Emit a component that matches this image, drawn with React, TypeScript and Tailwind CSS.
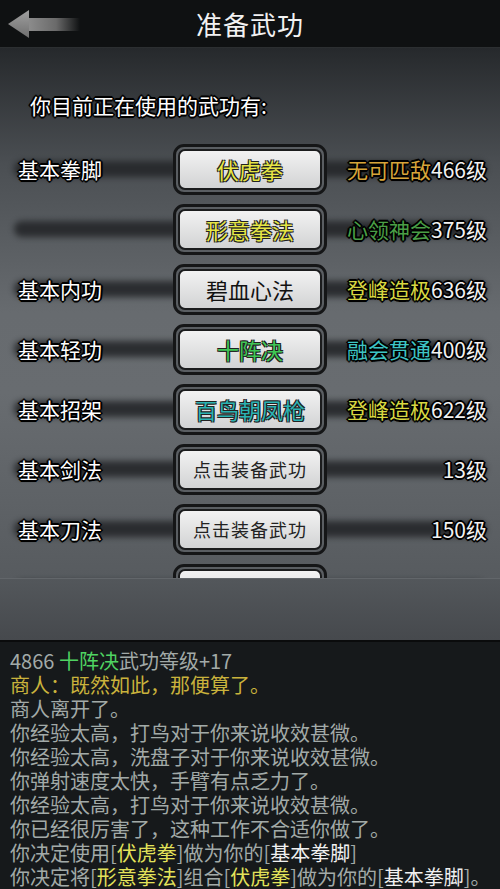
import React from 'react'

const FONT = "font-['Noto_Sans_CJK_SC','Noto_Sans',sans-serif]"
const OUTLINE =
  '[text-shadow:-1px_-1px_0_#000,1px_-1px_0_#000,-1px_1px_0_#000,1px_1px_0_#000,-2px_0_0_#000,2px_0_0_#000,0_-2px_0_#000,0_2px_0_#000,0_0_3px_#000]'
const SOFT = '[text-shadow:-1px_-1px_0_#222,1px_-1px_0_#222,-1px_1px_0_#222,1px_1px_0_#222]'

type Row = {
  label: string
  skill: string
  skillClass: string
  rank?: string
  rankClass?: string
  level: string
}

const rows: Row[] = [
  { label: '基本拳脚', skill: '伏虎拳', skillClass: 'text-[#e6e646] text-[22px]', rank: '无可匹敌', rankClass: 'text-[#d7a53a]', level: '466级' },
  { label: '', skill: '形意拳法', skillClass: 'text-[#e6e646] text-[22px]', rank: '心领神会', rankClass: 'text-[#4a9f46]', level: '375级' },
  { label: '基本内功', skill: '碧血心法', skillClass: 'text-[#111] text-[22px]', rank: '登峰造极', rankClass: 'text-[#d8d842]', level: '636级' },
  { label: '基本轻功', skill: '十阵决', skillClass: 'text-[#3fc655] text-[22px]', rank: '融会贯通', rankClass: 'text-[#3ec5c5]', level: '400级' },
  { label: '基本招架', skill: '百鸟朝凤枪', skillClass: 'text-[#2bb2b2] text-[22px]', rank: '登峰造极', rankClass: 'text-[#d8d842]', level: '622级' },
  { label: '基本剑法', skill: '点击装备武功', skillClass: 'text-[#222] text-[18px] tracking-[1px]', level: '13级' },
  { label: '基本刀法', skill: '点击装备武功', skillClass: 'text-[#222] text-[18px] tracking-[1px]', level: '150级' },
  { label: '基本枪棍', skill: '点击装备武功', skillClass: 'text-[#222] text-[18px] tracking-[1px]', rank: '初窥门径', rankClass: 'text-[#d8d8d8]', level: '' },
]

function BackArrow() {
  return (
    <svg width="72" height="30" viewBox="0 0 72 30" className="absolute left-[8px] top-[9px]">
      <defs>
        <linearGradient id="shaft" x1="0" x2="1" y1="0" y2="0">
          <stop offset="0" stopColor="#8e8e8e" />
          <stop offset="0.55" stopColor="#6a6a6a" />
          <stop offset="1" stopColor="#6a6a6a" stopOpacity="0" />
        </linearGradient>
        <linearGradient id="head" x1="0" x2="0" y1="0" y2="1">
          <stop offset="0" stopColor="#a0a0a0" />
          <stop offset="1" stopColor="#6e6e6e" />
        </linearGradient>
      </defs>
      <rect x="19" y="9" width="53" height="13" fill="url(#shaft)" />
      <polygon points="0,15 21,1 21,29" fill="url(#head)" />
    </svg>
  )
}

function SkillRow({ row }: { row: Row }) {
  return (
    <div className="relative flex h-[60px] items-center pl-[18px] pr-[13px]">
      {/* dark band behind the row */}
      <div className="absolute left-[14px] right-[14px] top-1/2 h-[16px] -translate-y-1/2 rounded-full bg-[#25272a] opacity-90 blur-[3px]" />
      <div className={`relative w-[155px] text-[21px] leading-none text-white ${OUTLINE}`}>{row.label}</div>
      <div className="relative h-[51px] w-[154px] rounded-[11px] border-[3px] border-[#151617] bg-[#5a5e62] p-[2px]">
        <div className="flex h-full items-center justify-center rounded-[7px] border-2 border-[#1b1c1d] bg-gradient-to-b from-[#f2f2f2] to-[#d2d3d4]">
          <span
            className={`${row.skillClass} leading-none ${row.skill === '碧血心法' || row.skill === '点击装备武功' ? '' : SOFT}`}
          >
            {row.skill}
          </span>
        </div>
      </div>
      <div className={`relative flex-1 whitespace-nowrap text-right text-[21px] leading-none ${OUTLINE}`}>
        {row.rank && <span className={row.rankClass}>{row.rank}</span>}
        <span className="text-[#f2f2f2]">{row.level}</span>
      </div>
    </div>
  )
}

const Y = 'text-[#e3e35a]'
const W = 'text-[#f0f0f0]'

export default function App() {
  return (
    <div className={`flex h-[889px] w-[500px] flex-col overflow-hidden bg-[#16191b] ${FONT}`}>
      {/* Header */}
      <div className="relative flex h-[48px] shrink-0 items-center justify-center border-b border-[#2c2f31] bg-[#0f1112]">
        <BackArrow />
        <h1 className="text-[26px] leading-none tracking-[1px] text-[#f2f2f2]">准备武功</h1>
      </div>

      {/* Skill list */}
      <div className="h-[530px] shrink-0 overflow-hidden bg-[linear-gradient(180deg,#26292c_0%,#4b4f53_22%,#676b6f_50%,#686c70_65%,#575b5f_100%)]">
        <div className={`h-[91px] pl-[30px] pt-[45px] text-[21px] leading-[24px] text-white ${OUTLINE}`}>
          你目前正在使用的武功有:
        </div>
        {rows.map((row, i) => (
          <SkillRow key={i} row={row} />
        ))}
      </div>
      <div className="h-[62px] shrink-0 border-t border-[#62666a] bg-gradient-to-b from-[#53575b] to-[#46494d]" />

      {/* Log */}
      <div className="flex-1 border-t-2 border-[#0a0b0c] bg-[#16191b] px-[10px] pt-[7px] text-[20px] leading-[24px] text-[#a2aaa8]">
        <div>
          4866 <span className="text-[#4fd362]">十阵决</span>武功等级+17
        </div>
        <div className="text-[#c9b23c]">商人：既然如此，那便算了。</div>
        <div>商人离开了。</div>
        <div>你经验太高，打鸟对于你来说收效甚微。</div>
        <div>你经验太高，洗盘子对于你来说收效甚微。</div>
        <div>你弹射速度太快，手臂有点乏力了。</div>
        <div>你经验太高，打鸟对于你来说收效甚微。</div>
        <div>你已经很厉害了，这种工作不合适你做了。</div>
        <div className="whitespace-nowrap">
          你决定使用[<span className={Y}>伏虎拳</span>]做为你的[<span className={W}>基本拳脚</span>]
        </div>
        <div className="whitespace-nowrap">
          你决定将[<span className={Y}>形意拳法</span>]组合[<span className={Y}>伏虎拳</span>]做为你的[
          <span className={W}>基本拳脚</span>]。
        </div>
      </div>
    </div>
  )
}
